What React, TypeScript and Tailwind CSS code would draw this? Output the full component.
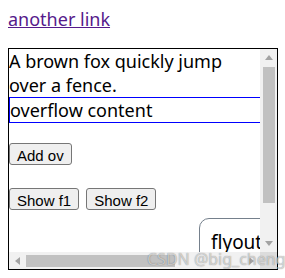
const body = { fontFamily: '"Noto Sans", "Open Sans", sans-serif' };
const btn = { fontFamily: '"Liberation Sans", Arial, sans-serif' };

function Arrow({ dir }: { dir: "up" | "down" | "left" | "right" }) {
  const pts = {
    up: "4,1 8,6 0,6",
    down: "0,1 8,1 4,6",
    left: "6,0 6,8 1,4",
    right: "1,0 1,8 6,4",
  }[dir];
  return (
    <svg width="8" height="8" viewBox="0 0 8 8">
      <polygon points={pts} fill="#a3a3a3" />
    </svg>
  );
}

export default function App() {
  return (
    <div className="relative w-[285px] h-[278px] bg-white px-2 pt-[7px]" style={body}>
      <a href="#" className="block h-6 text-[18px] leading-6 text-[#551a8b] underline">
        another link
      </a>

      {/* scroll box with Windows-style scrollbars */}
      <div className="mt-[17px] w-[270px] h-[222px] border border-black grid grid-cols-[251px_17px] grid-rows-[203px_17px]">
        <div className="overflow-hidden text-[18px] leading-6 text-black">
          <p className="w-[251px]">A brown fox quickly jump over a fence.</p>
          <div className="w-[260px] border border-[#0000ff]">overflow content</div>

          <button
            className="mt-5 h-[22px] px-[7px] text-[15px] bg-[#efefef] border border-[#767676] rounded-[3px]"
            style={btn}
          >
            Add ov
          </button>

          <div className="mt-[22px] flex gap-[7px]">
            <button
              className="h-[22px] px-[7px] text-[15px] bg-[#efefef] border border-[#767676] rounded-[3px]"
              style={btn}
            >
              Show f1
            </button>
            <button
              className="h-[22px] px-[7px] text-[15px] bg-[#efefef] border border-[#767676] rounded-[3px]"
              style={btn}
            >
              Show f2
            </button>
          </div>

          <div className="mt-2 ml-[190px] w-[170px] border border-[#75808c] rounded-tl-[10px] rounded-tr-[10px] pl-[11px] pt-[11px] text-[19px]">
            flyout
          </div>
        </div>

        <div className="bg-[#f1f1f1] flex flex-col items-center">
          <div className="h-[17px] flex items-center justify-center">
            <Arrow dir="up" />
          </div>
          <div className="mt-px w-[12px] h-[136px] bg-[#c1c1c1]" />
          <div className="mt-auto h-[17px] flex items-center justify-center">
            <Arrow dir="down" />
          </div>
        </div>

        <div className="bg-[#f1f1f1] flex items-center">
          <div className="w-[17px] flex items-center justify-center">
            <Arrow dir="left" />
          </div>
          <div className="h-[12px] w-[149px] bg-[#c1c1c1]" />
          <div className="ml-auto w-[17px] flex items-center justify-center">
            <Arrow dir="right" />
          </div>
        </div>
        <div className="bg-[#dcdcdc]" />
      </div>

      <div
        className="absolute left-[147px] top-[249px] whitespace-nowrap text-[16px] leading-5 text-[rgba(255,255,255,0.6)] pointer-events-none"
        style={{ textShadow: "0 0 1px rgba(0,0,0,0.5)", fontFamily: '"Noto Sans", sans-serif' }}
      >
        CSDN @big_cheng
      </div>
    </div>
  );
}
